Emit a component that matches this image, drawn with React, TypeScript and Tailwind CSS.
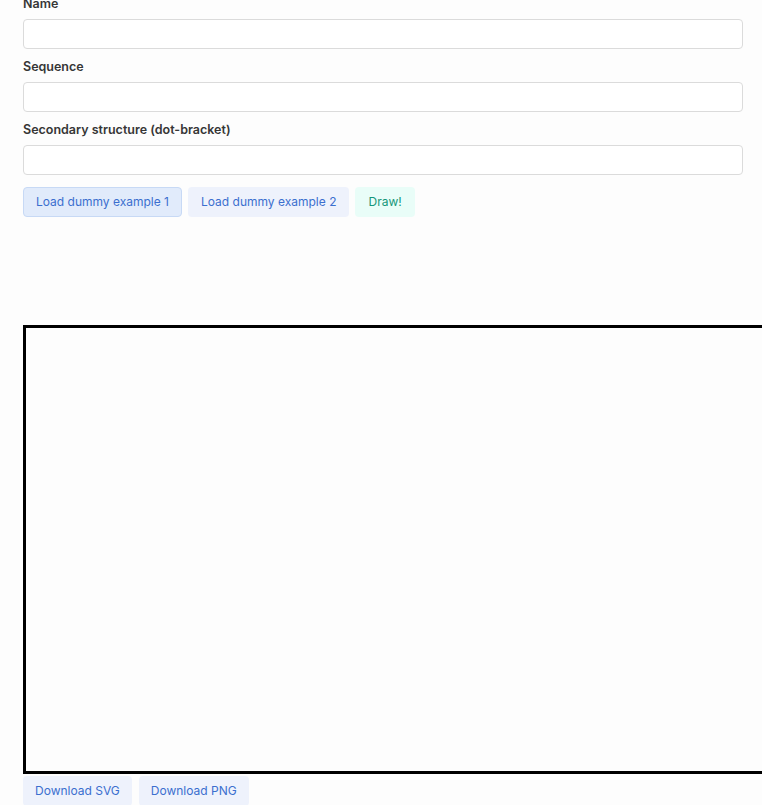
import React from "react";

const fields = ["Name", "Sequence", "Secondary structure (dot-bracket)"];

export default function App() {
  return (
    <div
      className="min-h-[805px] overflow-hidden bg-[#fdfdfd] text-[#333]"
      style={{ fontFamily: "Inter, 'Noto Sans', sans-serif" }}
    >
      <div className="-mt-1 pl-[23px] pr-[19px]">
        {fields.map((label, i) => (
          <div key={label} className={i > 0 ? "mt-[10px]" : ""}>
            <label className="block text-[12.5px] font-semibold leading-4 mb-[7px] text-[#363636]">
              {label}
            </label>
            <input
              type="text"
              className="block h-[30px] w-full rounded-[4px] border border-[#dbdbdb] bg-white px-2 text-[13px] outline-none"
            />
          </div>
        ))}

        <div className="mt-[12px] flex gap-[6px]">
          <button className="h-[30px] rounded-[4px] border border-[#c7d9f5] bg-[#e1ebfb] px-3 text-[12px] text-[#3b6fcf]">
            Load dummy example 1
          </button>
          <button className="h-[30px] rounded-[4px] border border-transparent bg-[#eef2fc] px-3 text-[12px] text-[#3b6fcf]">
            Load dummy example 2
          </button>
          <button className="h-[30px] rounded-[4px] border border-transparent bg-[#e9fdf8] px-3 text-[12px] text-[#16977a]">
            Draw!
          </button>
        </div>
      </div>

      <div className="mt-[108px] pl-[23px]">
        <div className="h-[449px] w-[800px] border-[3px] border-black bg-[#fdfdfd]" />
        <div className="mt-[2px] flex gap-[7px]">
          <button className="h-[30px] rounded-[4px] bg-[#eef2fc] px-3 text-[12px] text-[#3b6fcf]">
            Download SVG
          </button>
          <button className="h-[30px] rounded-[4px] bg-[#eef2fc] px-3 text-[12px] text-[#3b6fcf]">
            Download PNG
          </button>
        </div>
      </div>
    </div>
  );
}
